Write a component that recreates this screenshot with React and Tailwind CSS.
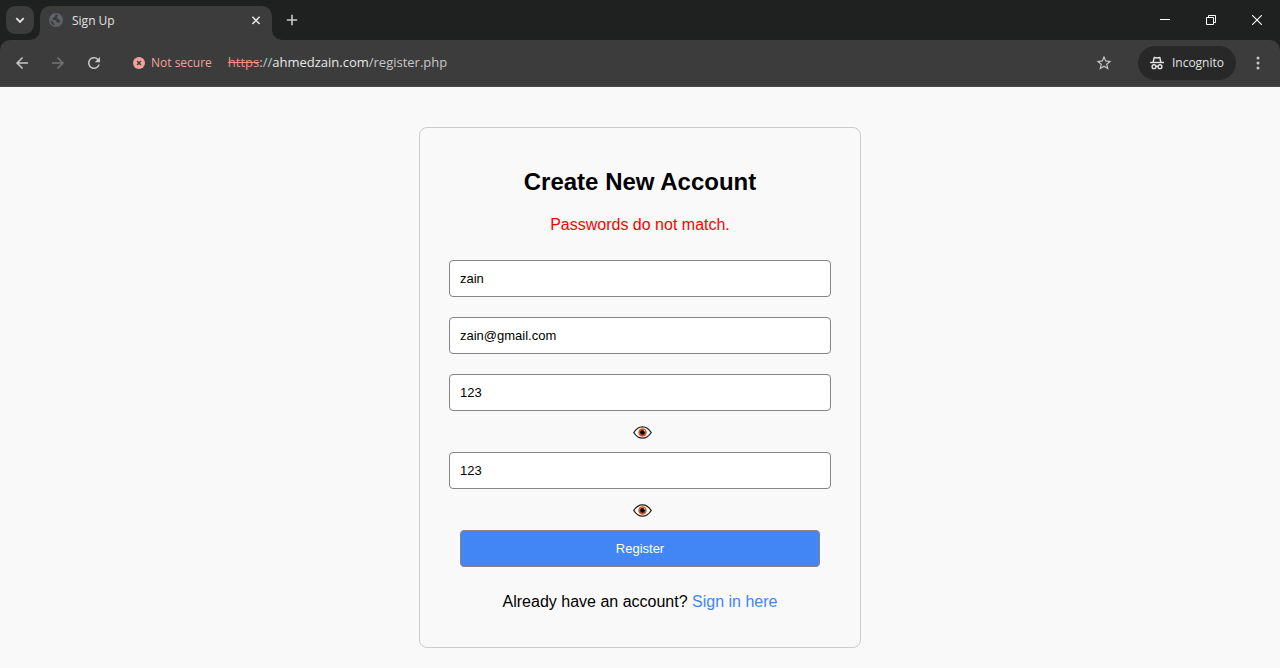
import React, { useState } from "react";
import { MdArrowBack, MdArrowForward, MdRefresh, MdStarBorder } from "react-icons/md";

function TabFlare({ side }) {
  const left = side === "left";
  return (
    <svg
      className={left ? "absolute bottom-0 -left-2.5" : "absolute bottom-0 -right-2.5"}
      width="10"
      height="10"
      viewBox="0 0 10 10"
      aria-hidden="true"
    >
      <path d={left ? "M10 0A10 10 0 0 1 0 10H10Z" : "M0 0A10 10 0 0 0 10 10H0Z"} fill="#3c3c3c" />
    </svg>
  );
}

function TabStrip() {
  return (
    <div className="flex h-10 items-end bg-[#1f2120] text-[#e3e3e3]">
      <button
        type="button"
        aria-label="Search tabs"
        className="mb-1.5 ml-1.5 flex size-7 items-center justify-center rounded-[9px] bg-[#3c3c3c]"
      >
        <svg width="10" height="10" viewBox="0 0 10 10" fill="none" stroke="currentColor" strokeWidth="1.8">
          <path d="M1.3 3.2 5 6.9 8.7 3.2" />
        </svg>
      </button>
      <div className="relative ml-1.5 flex h-[34px] w-58 items-center rounded-t-[10px] bg-[#3c3c3c] pr-2 pb-1 pl-2">
        <TabFlare side="left" />
        <svg width="16" height="16" viewBox="0 0 16 16" aria-hidden="true">
          <circle cx="8" cy="7" r="7" fill="#5f6368" />
          <path
            d="M8.600 1.500C6.800 2 7.200 3.400 6 4.200C4.800 5 4.200 5.400 4.600 6.400C5 7.400 7 6.800 8 7.600C8.800 8.300 8.200 9.400 9.400 9.700C10.800 10 12.400 9.200 12.800 7.400C11.600 7.600 10.600 7 10.300 6C10 5 8.600 5.200 8.800 4.200C9 3.300 10.200 3 10.600 2.100Z"
            fill="#3c3c3c"
          />
          <path d="M2.400 7.600C3.600 8 4.600 8.600 5.600 9.400C6.400 10 6 11.200 7.400 12.500C4.600 12.300 2.500 10.300 2.400 7.600Z" fill="#3c3c3c" />
        </svg>
        <span className="ml-2 flex-1 text-xs">Sign Up</span>
        <button type="button" aria-label="Close tab" className="flex size-4 items-center justify-center">
          <svg width="10" height="10" viewBox="0 0 10 10" stroke="currentColor" strokeWidth="1.6">
            <path d="M1.400 .8 8.600 8M8.600 .8 1.400 8" />
          </svg>
        </button>
        <TabFlare side="right" />
      </div>
      <button type="button" aria-label="New tab" className="mb-1.5 ml-1.5 flex size-7 items-center justify-center">
        <svg width="12" height="12" viewBox="0 0 12 12" stroke="#c7c7c7" strokeWidth="1.6">
          <path d="M6 .8v10.400M.8 6h10.400" />
        </svg>
      </button>
      <div className="ml-auto flex h-10 text-white">
        <button type="button" aria-label="Minimize" className="flex w-[46px] items-center justify-center">
          <svg width="10" height="10" viewBox="0 0 10 10" stroke="currentColor">
            <path d="M0 4.500h10" />
          </svg>
        </button>
        <button type="button" aria-label="Restore" className="flex w-[46px] items-center justify-center">
          <svg width="10" height="10" viewBox="0 0 10 10" fill="none" stroke="currentColor">
            <path d="M.5 2.500h7v7h-7zM2.500 2.500v-2h7v7h-2" />
          </svg>
        </button>
        <button type="button" aria-label="Close" className="flex w-[46px] items-center justify-center">
          <svg width="10" height="10" viewBox="0 0 10 10" stroke="currentColor" strokeWidth="1.100">
            <path d="M0 0 10 10M10 0 0 10" />
          </svg>
        </button>
      </div>
    </div>
  );
}

function IncognitoIcon() {
  return (
    <svg width="14" height="14" viewBox="0 0 14 14" fill="none" stroke="currentColor" aria-hidden="true">
      <path d="M0 6.500h14" strokeWidth="1.400" />
      <path d="M3.200 6.200 4.200 1.500Q7 2.300 9.800 1.500L10.800 6.200" strokeWidth="1.500" strokeLinejoin="round" />
      <circle cx="4" cy="10.700" r="1.900" strokeWidth="1.400" />
      <circle cx="10" cy="10.700" r="1.900" strokeWidth="1.400" />
      <path d="M5.900 10.400Q7 9.800 8.100 10.400" strokeWidth="1.200" />
    </svg>
  );
}

function Toolbar() {
  return (
    <div className="bg-[#1f2120]">
      <div className="flex h-[47px] items-center rounded-t-[10px] border-b border-[#4a4a4a] bg-[#3c3c3c] px-2 text-[#c7c7c7]">
        <div className="flex gap-2">
          <button type="button" aria-label="Back" className="flex size-7 items-center justify-center">
            <MdArrowBack size={18} />
          </button>
          <button type="button" aria-label="Forward" disabled className="flex size-7 items-center justify-center text-[#757575]">
            <MdArrowForward size={18} />
          </button>
          <button type="button" aria-label="Reload" className="flex size-7 items-center justify-center">
            <MdRefresh size={18} />
          </button>
        </div>
        <button type="button" className="ml-[25px] flex items-center gap-1.5 text-xs font-medium text-[#f2a199]">
          <svg width="12" height="12" viewBox="0 0 13 13" aria-hidden="true">
            <circle cx="6.500" cy="6.500" r="6.500" fill="currentColor" />
            <path d="M4.400 4.400 8.600 8.600M8.600 4.400 4.400 8.600" stroke="#3c3c3c" strokeWidth="1.500" />
          </svg>
          Not secure
        </button>
        <div className="ml-4 flex-1 text-[13px] text-[#c7c7c7]">
          <span className="text-[#f28b82] line-through">https</span>://
          <span className="text-[#e8e8e8]">ahmedzain.com</span>/register.php
        </div>
        <button type="button" aria-label="Bookmark this tab" className="mr-6 flex size-5 items-center justify-center">
          <MdStarBorder size={18} />
        </button>
        <button type="button" className="flex h-[34px] items-center gap-2 rounded-full bg-[#282828] px-3 text-xs text-[#e3e3e3]">
          <IncognitoIcon />
          Incognito
        </button>
        <button type="button" aria-label="Menu" className="ml-2 flex size-7 items-center justify-center">
          <svg width="4" height="14" viewBox="0 0 4 14" fill="currentColor">
            <circle cx="2" cy="2" r="1.500" />
            <circle cx="2" cy="7" r="1.500" />
            <circle cx="2" cy="12" r="1.500" />
          </svg>
        </button>
      </div>
    </div>
  );
}

function Field({ label, type = "text", initial }) {
  const [value, setValue] = useState(initial);
  return (
    <input
      aria-label={label}
      type={type}
      value={value}
      onChange={(e) => setValue(e.target.value)}
      className="block h-[37px] w-full rounded-[4px] border border-[#858585] bg-white px-2.5 text-[13px] text-black outline-none"
    />
  );
}

function PasswordField({ label, initial }) {
  const [visible, setVisible] = useState(true);
  return (
    <div>
      <Field label={label} type={visible ? "text" : "password"} initial={initial} />
      <div className="flex h-[41px] items-center justify-center pt-px pl-[5px]">
        <button type="button" aria-label="Toggle password visibility" onClick={() => setVisible(!visible)}>
          <svg width="19" height="13" viewBox="0 0 19 13" aria-hidden="true">
            <path
              d="M.8 6.500Q4.300 .8 9.500 .8T18.200 6.500Q14.700 12.200 9.500 12.200T.8 6.500Z"
              fill="#fff"
              stroke="#1f1f1f"
              strokeWidth="1.300"
            />
            <circle cx="9.500" cy="6.500" r="4.200" fill="#d05a22" />
            <circle cx="9.500" cy="6.500" r="2.300" fill="#000" />
            <circle cx="11.400" cy="4.700" r=".7" fill="#f6c9b0" />
          </svg>
        </button>
      </div>
    </div>
  );
}

export default function App() {
  return (
    <div className="flex min-h-screen flex-col bg-[#f9f9f9] font-['Open_Sans',sans-serif]">
      <header>
        <TabStrip />
        <Toolbar />
      </header>
      <main className="flex flex-1 items-start justify-center pt-10 pb-5 font-['Liberation_Sans',Arial,sans-serif] text-black">
        <form
          onSubmit={(e) => e.preventDefault()}
          className="w-full max-w-[442px] rounded-lg border border-[#cccccc] px-[29px] pt-10 pb-9 text-center"
        >
          <h1 className="text-2xl leading-7 font-bold">Create New Account</h1>
          <p className="mt-5 text-base leading-[18px] text-[#ff0000]">Passwords do not match.</p>
          <div className="mt-[26px] flex flex-col gap-5">
            <Field label="Username" initial="zain" />
            <Field label="Email" type="email" initial="zain@gmail.com" />
            <div>
              <PasswordField label="Password" initial="123" />
              <PasswordField label="Confirm password" initial="123" />
            </div>
          </div>
          <div className="px-[11px]">
            <button
              type="submit"
              className="h-[37px] w-full rounded-[4px] border border-[#858585] bg-[#4285f4] text-[13px] text-white"
            >
              Register
            </button>
          </div>
          <p className="mt-[26px] text-base leading-[18px]">
            Already have an account?{" "}
            <a href="#signin" className="text-[#4285f4]">
              Sign in here
            </a>
          </p>
        </form>
      </main>
    </div>
  );
}
